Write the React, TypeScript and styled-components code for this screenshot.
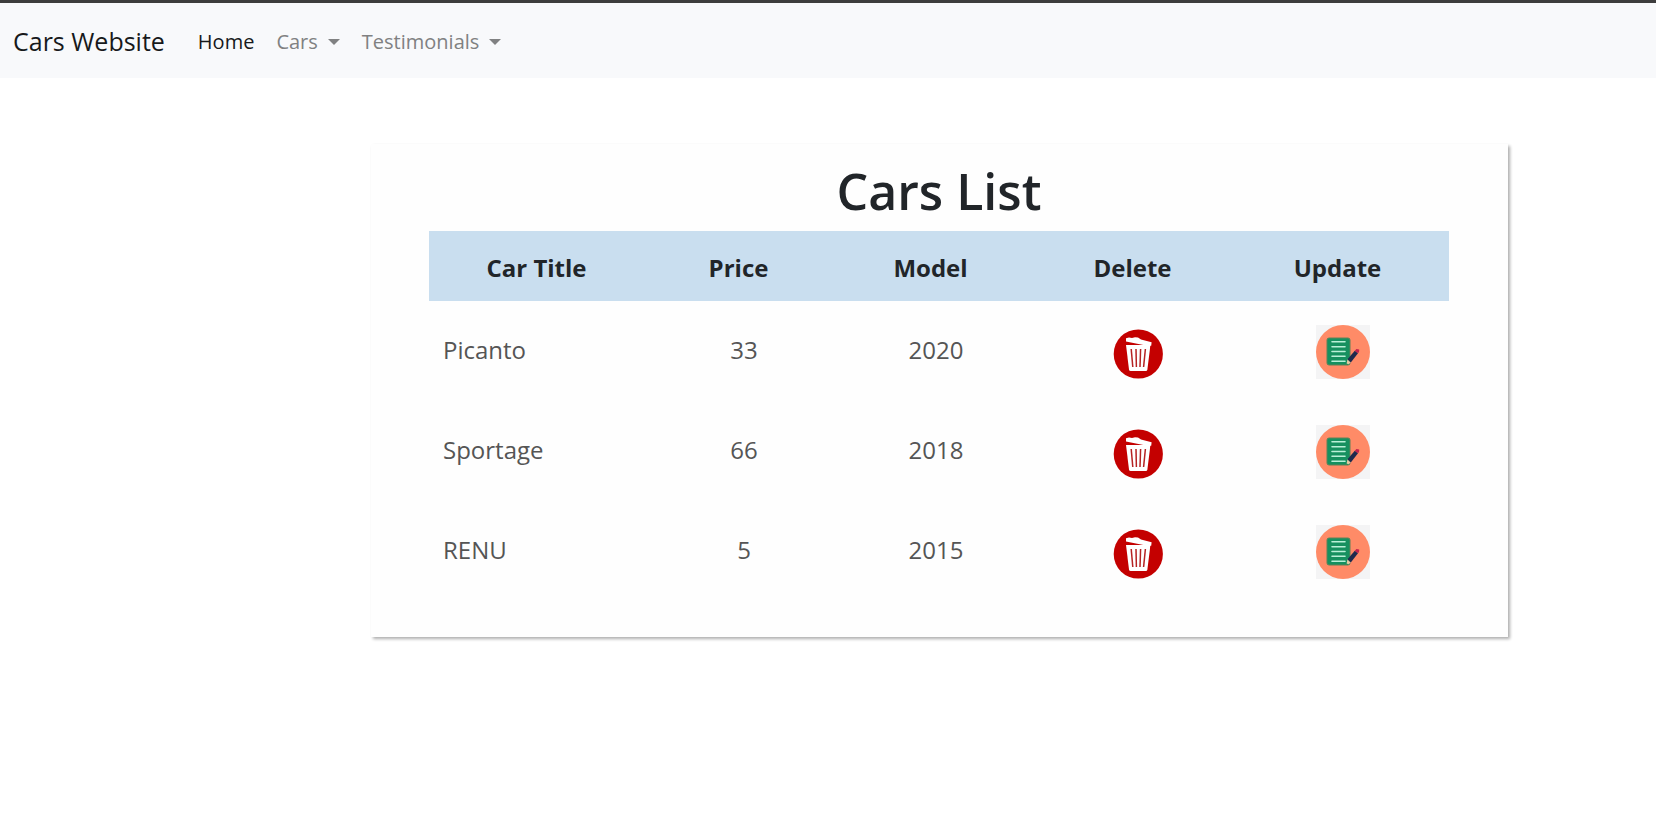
import React from "react";
import styled, { createGlobalStyle } from "styled-components";

const GlobalStyle = createGlobalStyle`
  *, *::before, *::after { box-sizing: border-box; }
  body {
    margin: 0;
    background: #ffffff;
    color: #212529;
    font-family: "Segoe UI", "Open Sans", "Noto Sans", sans-serif;
    font-size: 24px;
    line-height: 36px;
  }
`;

const Navbar = styled.nav`
  display: flex;
  align-items: center;
  height: 78px;
  padding: 0 13px;
  border-top: 3px solid #3d3d3d;
  background: #f8f9fb;
`;

const Brand = styled.a`
  margin-right: 33px;
  color: #17191b;
  font-size: 25px;
  text-decoration: none;
`;

const NavList = styled.ul`
  display: flex;
  gap: 22px;
  margin: 0;
  padding: 2px 0 0;
  list-style: none;
  font-size: 20px;
  line-height: 30px;
`;

const NavLink = styled.a`
  color: #17191b;
  text-decoration: none;
`;

const NavToggle = styled.button`
  display: flex;
  align-items: center;
  gap: 10px;
  padding: 0;
  border: 0;
  background: none;
  color: #808182;
  font: inherit;
  cursor: pointer;

  &::after {
    content: "";
    border: 6px solid transparent;
    border-top-color: currentColor;
    border-bottom: 0;
  }
`;

const Card = styled.main`
  margin: 66px 148px 40px 371px;
  padding: 14px 59px 36px 58px;
  background: #fefefe;
  box-shadow: 2px 2px 3px rgba(0, 0, 0, 0.32);
`;

const Title = styled.h1`
  margin: 0 0 6px;
  font-size: 50px;
  font-weight: 600;
  line-height: 67px;
  text-align: center;
`;

const Table = styled.table`
  width: 100%;
  table-layout: fixed;
  border-collapse: collapse;
`;

const Column = styled.col<{ $width: number }>`
  width: ${({ $width }) => $width}px;
`;

const HeadCell = styled.th`
  height: 70px;
  padding: 4px 11px 0 0;
  background: #c9deef;
  font-weight: 700;
`;

const Cell = styled.td<{ $align?: "left" | "center" }>`
  height: 100px;
  padding: 0 ${({ $align }) => ($align === "left" ? "14px" : "0")} 2px;
  color: #555555;
  text-align: ${({ $align }) => $align ?? "center"};
`;

const ActionCell = styled.td`
  height: 100px;
  padding: 2px 0 0;
`;

const IconButton = styled.button`
  display: block;
  margin: 0 auto;
  padding: 0;
  border: 0;
  background: none;
  cursor: pointer;

  svg { display: block; }
`;

const TrashIcon = () => (
  <svg width="54" height="54" viewBox="0 0 54 54" aria-hidden="true">
    <circle cx="27.3" cy="29" r="24.6" fill="#c40000" />
    <path d="M15 13.2 L18 12.4 L21 13 L24 12.2 L27 12.6 L30 14.5 L40.6 17.2 L40.2 20.8 L36 20.8 L15 16.6 Z" fill="#fff" />
    <path d="M15 20 L39.4 20 L36.4 44.5 Q36.2 46 34.7 46 L19.7 46 Q18.2 46 18 44.5 Z" fill="#fff" />
    <g stroke="#b52222" strokeWidth="1.5" fill="none">
      <path d="M20.2 24 L21.8 42" />
      <path d="M25 24 L25.4 42" />
      <path d="M29.6 24 L29 42" />
      <path d="M34.4 24 L32.6 42" />
    </g>
  </svg>
);

const EditIcon = () => (
  <svg width="54" height="54" viewBox="0 0 54 54" aria-hidden="true">
    <rect width="54" height="54" fill="#f4f4f5" />
    <circle cx="27" cy="27" r="27" fill="#ff8b67" />
    <rect x="11" y="13" width="23" height="27" rx="2" fill="#16905f" stroke="#5f8258" />
    <path d="M16 16.8h13M16 21.8h13M16 26.5h13M16 31.3h13M16 36.2h13" stroke="#b9f0d8" strokeWidth="1.6" strokeLinecap="round" />
    <path d="M31.5 34.3 L34.8 37.5 L32.4 39.3 L30.6 38.5 Z" fill="#e7c9a0" />
    <path d="M31.5 34.3 L38.8 25.7 L42 28.3 L34.8 37.5 Z" fill="#1f2a4d" />
    <path d="M38.8 25.7 L40.4 23.9 L43.2 24.5 L43 27.1 L42 28.3 Z" fill="#c4214e" />
  </svg>
);

const columnWidths = [226, 178, 206, 198, 212];
const headings = ["Car Title", "Price", "Model", "Delete", "Update"];
const cars = [
  { title: "Picanto", price: 33, model: 2020 },
  { title: "Sportage", price: 66, model: 2018 },
  { title: "RENU", price: 5, model: 2015 },
];

export default function App() {
  return (
    <>
      <GlobalStyle />
      <Navbar>
        <Brand href="#">Cars Website</Brand>
        <NavList>
          <li><NavLink href="#" aria-current="page">Home</NavLink></li>
          <li><NavToggle type="button" aria-haspopup="true">Cars</NavToggle></li>
          <li><NavToggle type="button" aria-haspopup="true">Testimonials</NavToggle></li>
        </NavList>
      </Navbar>
      <Card>
        <Title>Cars List</Title>
        <Table>
          <colgroup>
            {columnWidths.map((width, i) => <Column key={i} $width={width} />)}
          </colgroup>
          <thead>
            <tr>
              {headings.map((heading) => <HeadCell key={heading} scope="col">{heading}</HeadCell>)}
            </tr>
          </thead>
          <tbody>
            {cars.map((car) => (
              <tr key={car.title}>
                <Cell $align="left">{car.title}</Cell>
                <Cell>{car.price}</Cell>
                <Cell>{car.model}</Cell>
                <ActionCell>
                  <IconButton type="button" aria-label={`Delete ${car.title}`}><TrashIcon /></IconButton>
                </ActionCell>
                <ActionCell>
                  <IconButton type="button" aria-label={`Update ${car.title}`}><EditIcon /></IconButton>
                </ActionCell>
              </tr>
            ))}
          </tbody>
        </Table>
      </Card>
    </>
  );
}
